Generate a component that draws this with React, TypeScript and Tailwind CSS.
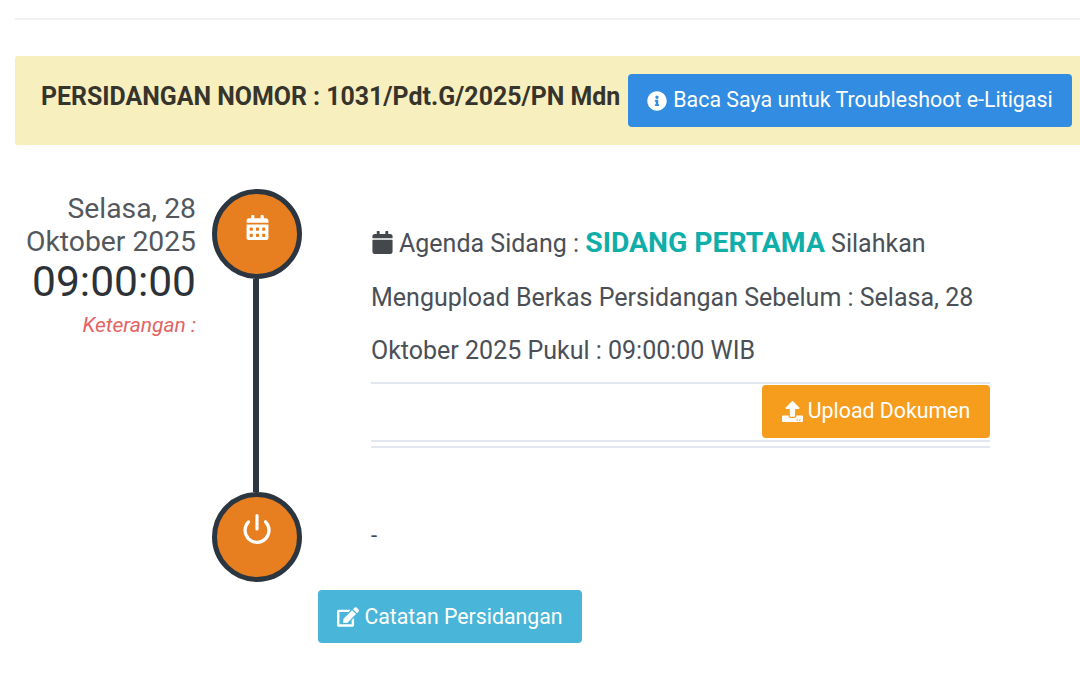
import { Power } from "lucide-react";
import { FaCalendar, FaCalendarAlt, FaEdit, FaInfoCircle, FaUpload } from "react-icons/fa";

export default function App() {
  return (
    <div className="h-[686px] w-[1080px] overflow-hidden bg-white pl-[15px] pt-[18px] font-['Roboto',sans-serif] text-[#4b4f56]">
      <div className="h-[2px] bg-[#eff1f4]" />

      <div className="mt-[36px] flex h-[89px] items-center rounded-l-[3px] bg-[#f8efbf] pl-[26px] pr-[8px]">
        <h2 className="mb-[6px] whitespace-nowrap text-[24.9px] font-bold leading-none text-[#36342b]">
          PERSIDANGAN NOMOR : 1031/Pdt.G/2025/PN Mdn
        </h2>
        <button
          type="button"
          className="ml-auto flex h-[53px] w-[444px] items-center justify-center gap-[6px] rounded-[4px] bg-[#318ce2] text-[21.4px] text-white"
        >
          <FaInfoCircle className="text-[20px]" />
          <span className="whitespace-nowrap">Baca Saya untuk Troubleshoot e-Litigasi</span>
        </button>
      </div>

      <div className="mt-[44px] flex">
        <div className="w-[181px] shrink-0 pt-[3px] text-right">
          <div className="text-[28.3px] leading-[33px] text-[#54585d]">
            Selasa, 28
            <br />
            Oktober 2025
          </div>
          <div className="text-[42.5px] leading-[48px] text-[#2c3238]">09:00:00</div>
          <div className="mt-[7px] text-[21px] italic leading-[24px] text-[#e36464]">Keterangan :</div>
        </div>

        <div className="ml-[16px] flex w-[90px] shrink-0 flex-col items-center">
          <div className="flex h-[90px] w-[90px] items-start justify-center rounded-full border-[5px] border-[#2c3640] bg-[#e77f20] pt-[21px] text-white">
            <FaCalendarAlt className="text-[25px]" />
          </div>
          <div className="mr-[3px] h-[213px] w-[6px] bg-[#2c3640]" />
          <div className="flex h-[90px] w-[90px] items-start justify-center rounded-full border-[5px] border-[#2c3640] bg-[#e77f20] pt-[16px] text-white">
            <Power size={32} strokeWidth={2.4} />
          </div>
        </div>

        <div className="ml-[69px] w-[619px] shrink-0 pt-[28px]">
          <p className="text-[25px] leading-[53.5px] text-[#4b4f56]">
            <FaCalendar className="mr-[5px] inline-block align-[-2px] text-[23px] text-[#44484d]" />
            Agenda Sidang : <span className="text-[28.3px] leading-none font-bold text-[#10aea8]">SIDANG PERTAMA</span> Silahkan
            Mengupload Berkas Persidangan Sebelum : Selasa, 28 Oktober 2025 Pukul : 09:00:00 WIB
          </p>
          <div className="mt-[4px] border-t-2 border-[#e3e8f0] pt-[1px]">
            <div className="flex justify-end">
              <button
                type="button"
                className="flex h-[53px] w-[228px] items-center justify-center gap-[5px] rounded-[4px] bg-[#f79d1e] text-[21.3px] text-white"
              >
                <FaUpload className="text-[21px]" />
                Upload Dokumen
              </button>
            </div>
          </div>
          <div className="mt-[2px] h-[2px] bg-[#e3e8f0]" />
          <div className="mt-[4px] h-[2px] bg-[#e3e8f0]" />
          <p className="mt-[73px] text-[22px] leading-[30px] text-[#44484d]">-</p>
        </div>
      </div>

      <div className="ml-[303px] mt-[8px] flex">
        <button
          type="button"
          className="flex h-[53px] w-[264px] items-center justify-center gap-[5px] rounded-[4px] bg-[#49b5d8] text-[21.3px] text-white"
        >
          <FaEdit className="text-[22px]" />
          Catatan Persidangan
        </button>
      </div>
    </div>
  );
}
